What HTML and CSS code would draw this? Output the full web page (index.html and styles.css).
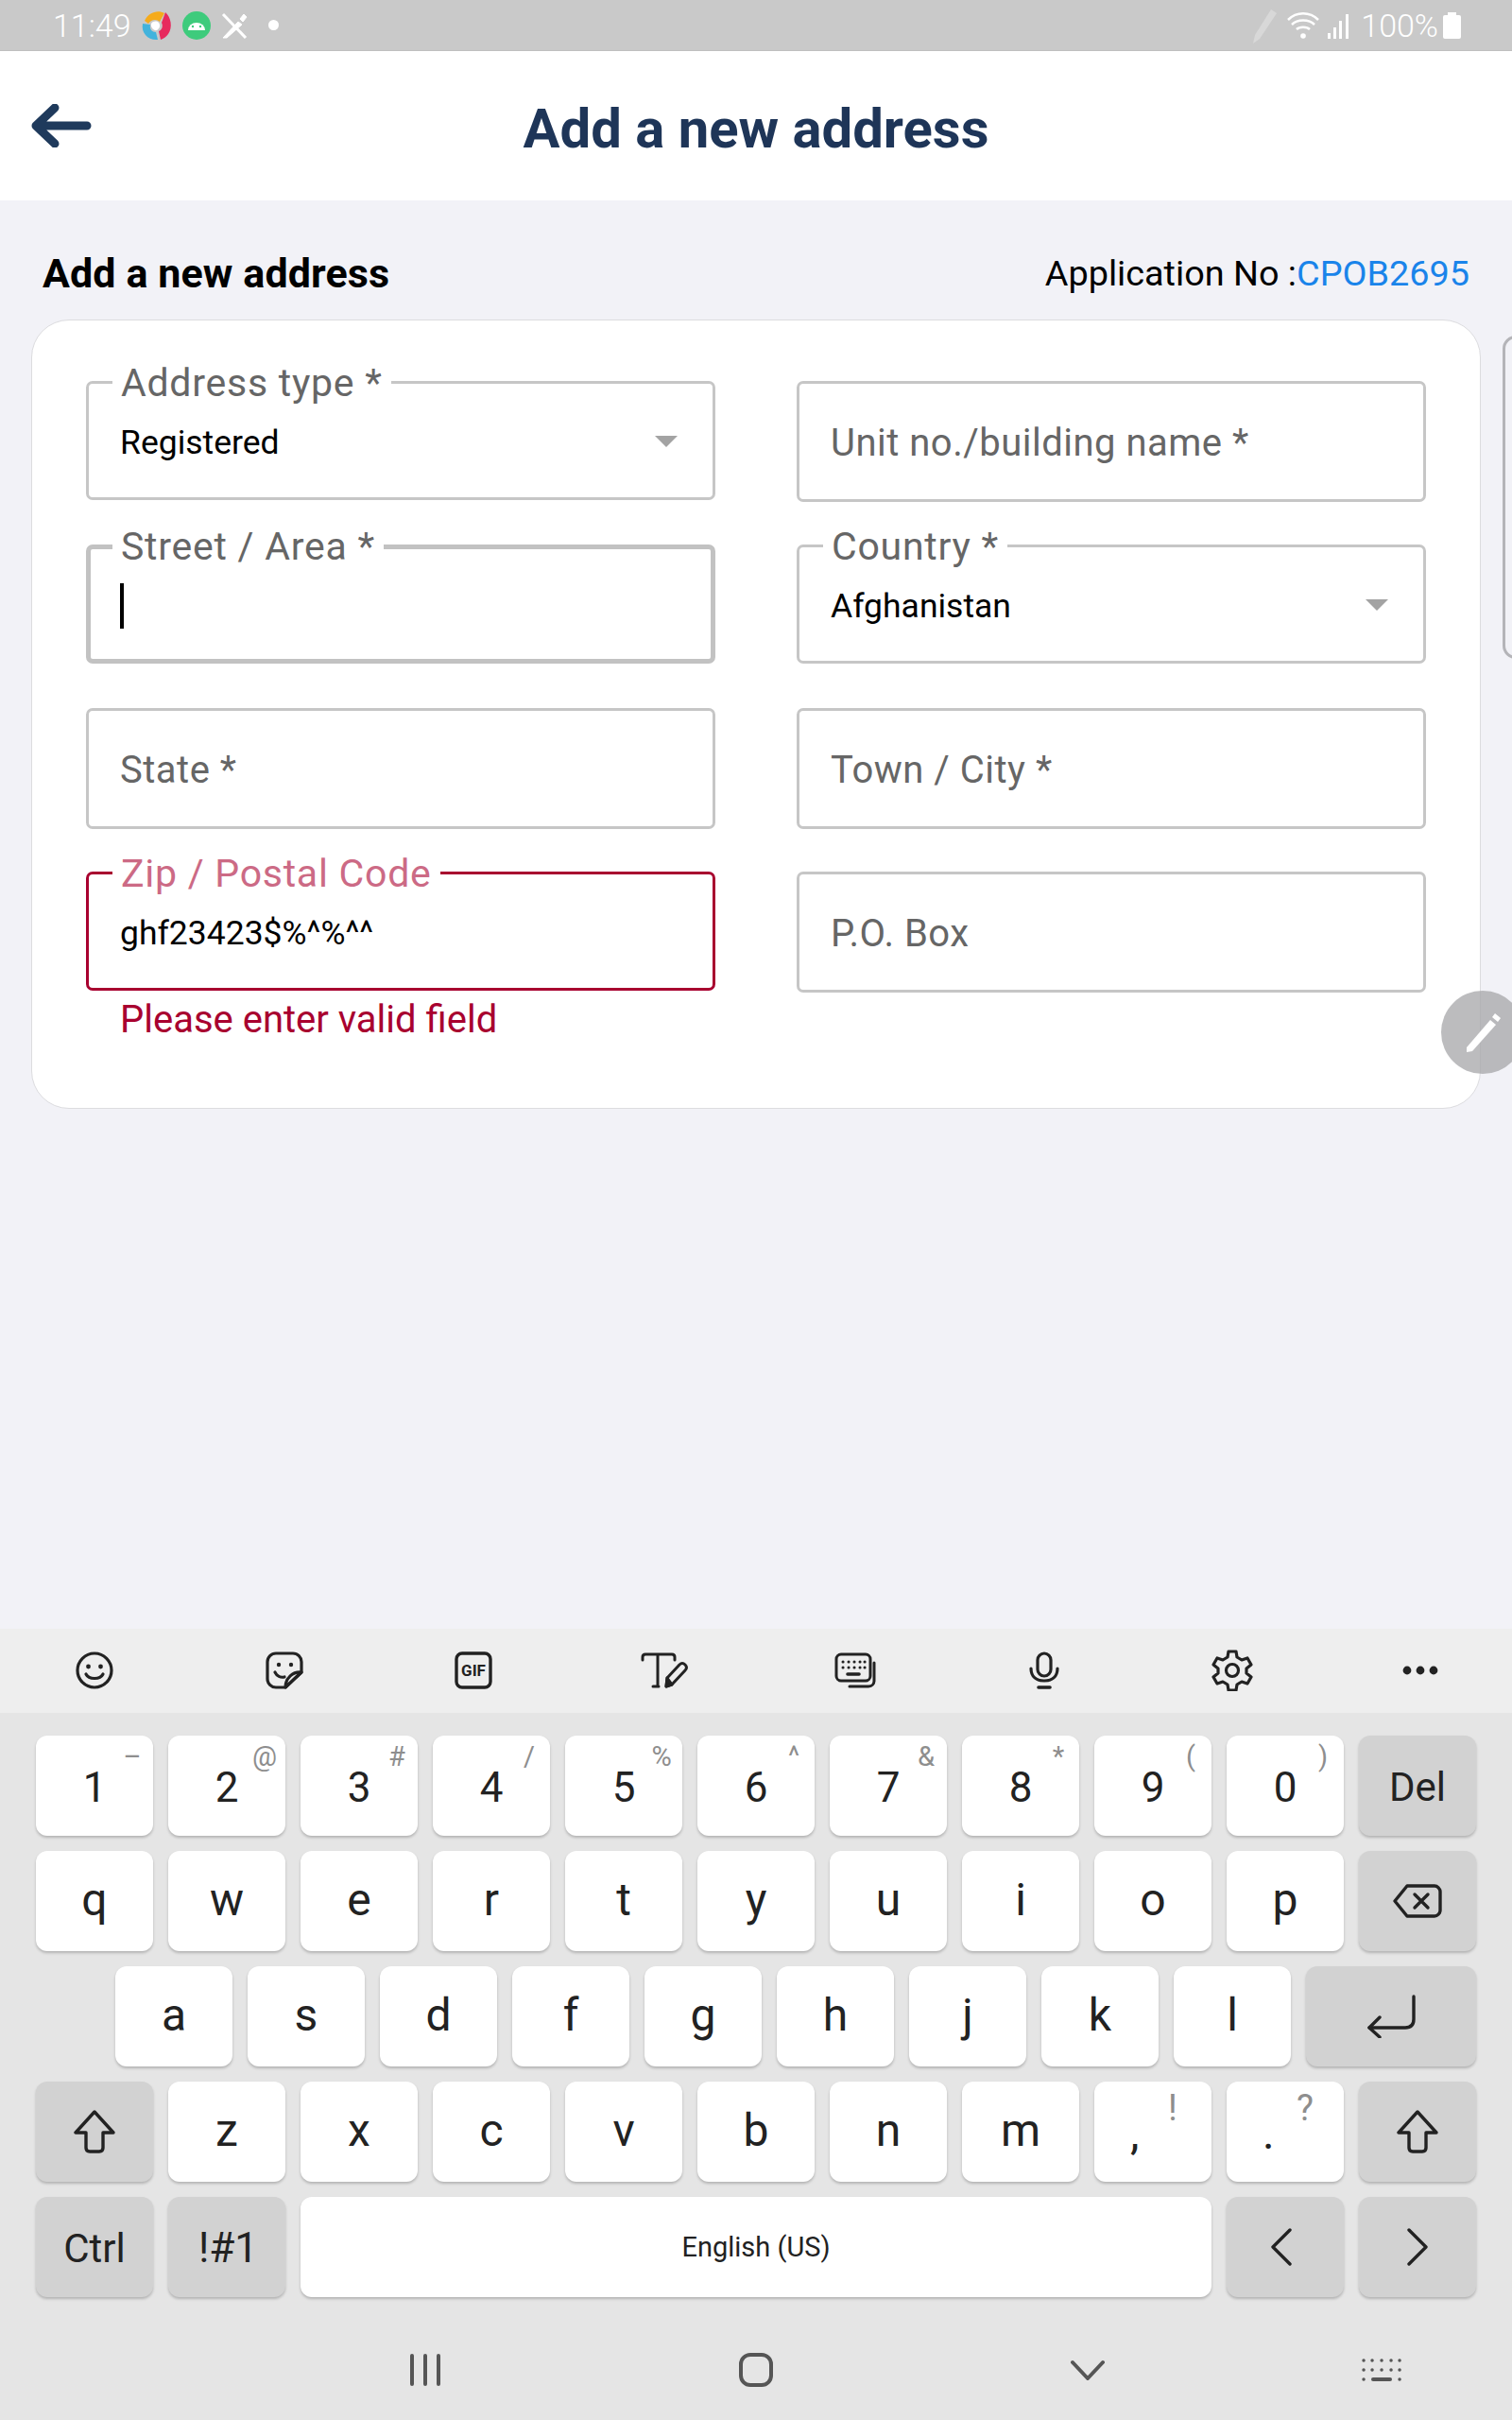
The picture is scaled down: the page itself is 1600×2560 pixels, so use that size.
FILE: index.html
```html
<!DOCTYPE html>
<html lang="en">
<head>
  <meta charset="UTF-8">
  <title>Add a new address</title>
  <link rel="stylesheet" href="styles.css">
</head>
<body>
  <div class="statusbar">
    <span class="clock">11:49</span>
    <svg class="st-app" width="34" height="34" viewBox="0 0 34 34">
      <path d="M4 12C8 3 18 0 25 4l-5 9c-3-3-9-3-12 2z" fill="#f5ab1c"/>
      <path d="M26 3c6 5 8 16 3 23-2 3-5 5-8 6l-2-9c3-1 5-5 3-9z" fill="#e72a5e"/>
      <path d="M2 15l8 1c-1 5 2 8 6 8l2 8C8 33 0 25 2 15z" fill="#43b3dc"/>
      <path d="M11 15c2-3 6-3 8-1 2 3 1 6-2 8-3 1-7-3-6-7z" fill="#fff"/>
    </svg>
    <svg class="st-app" width="30" height="30" viewBox="0 0 30 30">
      <circle cx="15" cy="15" r="15" fill="#3ecb7c"/>
      <path d="M6 20a9 8 0 0 1 18 0z" fill="#fff"/>
      <circle cx="11" cy="16" r="1.2" fill="#3ecb7c"/>
      <circle cx="19" cy="16" r="1.2" fill="#3ecb7c"/>
    </svg>
    <svg class="st-icon" width="30" height="30" viewBox="0 0 30 30" fill="none" stroke="#fff">
      <path d="M3 3l24 25" stroke-width="3"/>
      <path d="M3 28L19 11l4 3L7 28z" fill="#fff" stroke-width="1"/>
      <path d="M21 8l4-5 3 3-4 5z" fill="#fff" stroke-width="1"/>
    </svg>
    <span class="st-dot"></span>
    <span class="st-spacer"></span>
    <svg width="28" height="40" viewBox="0 0 28 40" fill="#d8d8d8"><path d="M1 39l2-9L20 3l6 4L8 34z"/></svg>
    <svg class="st-wifi" width="38" height="32" viewBox="0 0 38 32" fill="none" stroke="#fff" stroke-width="2.5">
      <path d="M2 10c9-9 23-9 32 0M6 15c6-6 18-6 24 0M11 20c3-3 11-3 14 0"/>
      <circle cx="18" cy="27" r="2.8" fill="#fff" stroke="none"/>
    </svg>
    <svg class="st-signal" width="24" height="28" viewBox="0 0 24 28" fill="#fff">
      <rect x="0" y="22" width="3" height="6"/><rect x="6" y="16" width="3" height="12"/>
      <rect x="12" y="9" width="3" height="19"/><rect x="19" y="2" width="3" height="26"/>
    </svg>
    <span class="st-batt-text">100%</span>
    <svg class="st-batt" width="19" height="28" viewBox="0 0 19 28" fill="#fff">
      <rect x="5" y="0" width="9" height="4"/><rect x="0" y="3" width="19" height="25" rx="2"/>
    </svg>
  </div>

  <header class="topbar">
    <svg class="back" width="64" height="46" viewBox="0 0 64 46" fill="none" stroke="#1f3a5c" stroke-width="9" stroke-linecap="round" stroke-linejoin="round">
      <path d="M59 23H5M25 4L5 23l20 19"/>
    </svg>
    <h1>Add a new address</h1>
  </header>

  <main class="content">
    <div class="section-head">
      <h2>Add a new address</h2>
      <span class="app-no">Application No :<span class="app-code">CPOB2695</span></span>
    </div>

    <div class="cards">
      <section class="card">
        <div class="form-grid">
          <div class="field">
            <label class="float">Address type *</label>
            <span class="value">Registered</span>
            <span class="caret"></span>
          </div>
          <div class="field tall">
            <span class="placeholder">Unit no./building name *</span>
          </div>
          <div class="field focused">
            <label class="float">Street / Area *</label>
            <span class="cursor"></span>
          </div>
          <div class="field">
            <label class="float">Country *</label>
            <span class="value">Afghanistan</span>
            <span class="caret"></span>
          </div>
          <div class="field tall">
            <span class="placeholder">State *</span>
          </div>
          <div class="field tall">
            <span class="placeholder">Town / City *</span>
          </div>
          <div class="field-wrap">
            <div class="field error">
              <label class="float">Zip / Postal Code</label>
              <span class="value">ghf23423$%^%^^</span>
            </div>
            <p class="error-text">Please enter valid field</p>
          </div>
          <div class="field tall">
            <span class="placeholder">P.O. Box</span>
          </div>
        </div>
      </section>
      <div class="card-next"></div>
    </div>

    <div class="fab">
      <svg width="40" height="42" viewBox="0 0 40 42" fill="#fff">
        <path d="M3 37L28 8l6 5L9 41l-6 1z"/>
        <path d="M30 5l3-4 6 5-3 4z"/>
      </svg>
    </div>
  </main>

  <div class="keyboard">
    <div class="kb-tools">
      <div class="tool">
        <svg width="40" height="40" viewBox="0 0 40 40" fill="none" stroke="#222" stroke-width="3.2" stroke-linecap="round">
          <circle cx="20" cy="20" r="18"/>
          <circle cx="13.5" cy="16" r="2.4" fill="#222" stroke="none"/>
          <circle cx="26.5" cy="16" r="2.4" fill="#222" stroke="none"/>
          <path d="M11 24c3 6 15 6 18 0"/>
        </svg>
      </div>
      <div class="tool">
        <svg width="40" height="40" viewBox="0 0 40 40" fill="none" stroke="#222" stroke-width="3.2" stroke-linecap="round" stroke-linejoin="round">
          <path d="M21 38H11a9 9 0 0 1-9-9V11a9 9 0 0 1 9-9h18a9 9 0 0 1 9 9v11z"/>
          <path d="M38 22c-9-1-17 6-17 16z"/>
          <circle cx="14" cy="14" r="2.2" fill="#222" stroke="none"/>
          <circle cx="27" cy="14" r="2.2" fill="#222" stroke="none"/>
          <path d="M10 22c2 4 6 6 10 5"/>
        </svg>
      </div>
      <div class="tool">
        <svg width="40" height="40" viewBox="0 0 40 40">
          <rect x="2" y="2" width="36" height="36" rx="6" fill="none" stroke="#222" stroke-width="3.4"/>
          <text x="20" y="26" text-anchor="middle" class="gif-text">GIF</text>
        </svg>
      </div>
      <div class="tool nudge-sm">
        <svg width="50" height="38" viewBox="0 0 50 38" fill="none" stroke="#222" stroke-width="3" stroke-linecap="round" stroke-linejoin="round">
          <path d="M2 8V5c0-2 1-3 3-3h28c2 0 3 1 3 3v3M18 2v34M13 36h6"/>
          <path d="M27 36l1-9 13-14c2-2 4-2 6 0s2 4 0 6L33 34z"/>
          <path d="M27 36l1-9 5 7z" fill="#222"/>
        </svg>
      </div>
      <div class="tool nudge">
        <svg width="44" height="38" viewBox="0 0 44 38" fill="none" stroke="#222" stroke-width="3" stroke-linecap="round">
          <rect x="2" y="2" width="36" height="28" rx="5"/>
          <path d="M42 11v19c0 3-2 6-6 6H16"/>
          <path d="M9 10h.1M15 10h.1M21 10h.1M27 10h.1M32 10h.1M9 16h.1M15 16h.1M21 16h.1M27 16h.1M32 16h.1"/>
          <path d="M14 23h12" stroke-width="3.6"/>
        </svg>
      </div>
      <div class="tool nudge">
        <svg width="32" height="40" viewBox="0 0 32 40" fill="none" stroke="#222" stroke-width="3.2" stroke-linecap="round">
          <rect x="9" y="2" width="14" height="24" rx="7"/>
          <path d="M2 18c0 9 6 13 14 13s14-4 14-13"/>
          <path d="M10 38h12" stroke-width="3.6"/>
        </svg>
      </div>
      <div class="tool nudge-sm">
        <svg width="44" height="44" viewBox="0 0 44 44" fill="none" stroke="#222" stroke-width="3.2" stroke-linejoin="round">
          <path d="M18 2h8l1 6 5 3 6-2 4 7-5 4v5l5 4-4 7-6-2-5 3-1 6h-8l-1-6-5-3-6 2-4-7 5-4v-5l-5-4 4-7 6 2 5-3z"/>
          <circle cx="22" cy="22" r="6.5"/>
        </svg>
      </div>
      <div class="tool">
        <svg width="38" height="10" viewBox="0 0 38 10" fill="#222">
          <circle cx="5" cy="5" r="4.4"/><circle cx="19" cy="5" r="4.4"/><circle cx="33" cy="5" r="4.4"/>
        </svg>
      </div>
    </div>

    <div class="kb-keys">
      <div class="kb-row">
        <div class="key num">1<span class="hint">–</span></div>
        <div class="key num">2<span class="hint">@</span></div>
        <div class="key num">3<span class="hint">#</span></div>
        <div class="key num">4<span class="hint">/</span></div>
        <div class="key num">5<span class="hint">%</span></div>
        <div class="key num">6<span class="hint">^</span></div>
        <div class="key num">7<span class="hint">&amp;</span></div>
        <div class="key num">8<span class="hint">*</span></div>
        <div class="key num">9<span class="hint">(</span></div>
        <div class="key num">0<span class="hint">)</span></div>
        <div class="key fn label">Del</div>
      </div>
      <div class="kb-row">
        <div class="key">q</div><div class="key">w</div><div class="key">e</div><div class="key">r</div>
        <div class="key">t</div><div class="key">y</div><div class="key">u</div><div class="key">i</div>
        <div class="key">o</div><div class="key">p</div>
        <div class="key fn icon">
          <svg width="52" height="36" viewBox="0 0 52 36" fill="none" stroke="#222" stroke-width="3.4" stroke-linecap="round" stroke-linejoin="round">
            <path d="M15 2h29c3 0 6 3 6 6v20c0 3-3 6-6 6H15L2 18z"/>
            <path d="M23 11l14 14M37 11L23 25"/>
          </svg>
        </div>
      </div>
      <div class="kb-row row-home">
        <div class="key">a</div><div class="key">s</div><div class="key">d</div><div class="key">f</div>
        <div class="key">g</div><div class="key">h</div><div class="key">j</div><div class="key">k</div>
        <div class="key">l</div>
        <div class="key fn wide icon">
          <svg width="52" height="46" viewBox="0 0 52 46" fill="none" stroke="#222" stroke-width="3.4" stroke-linecap="round" stroke-linejoin="round">
            <path d="M50 2v24c0 6-3 9-9 9H3"/>
            <path d="M14 24L3 35l11 10"/>
          </svg>
        </div>
      </div>
      <div class="kb-row">
        <div class="key fn icon">
          <svg class="shift" width="44" height="46" viewBox="0 0 44 46" fill="none" stroke="#222" stroke-width="3.4" stroke-linejoin="round">
            <path d="M22 2L2 24h11v16c0 3 2 4 4 4h10c2 0 4-1 4-4V24h11z"/>
          </svg>
        </div>
        <div class="key">z</div><div class="key">x</div><div class="key">c</div><div class="key">v</div>
        <div class="key">b</div><div class="key">n</div><div class="key">m</div>
        <div class="key punct">,<span class="hint">!</span></div>
        <div class="key punct">.<span class="hint">?</span></div>
        <div class="key fn icon">
          <svg class="shift" width="44" height="46" viewBox="0 0 44 46" fill="none" stroke="#222" stroke-width="3.4" stroke-linejoin="round">
            <path d="M22 2L2 24h11v16c0 3 2 4 4 4h10c2 0 4-1 4-4V24h11z"/>
          </svg>
        </div>
      </div>
      <div class="kb-row">
        <div class="key fn label">Ctrl</div>
        <div class="key fn label sym">!#1</div>
        <div class="key wide space">English (US)</div>
        <div class="key fn icon">
          <svg class="chev-left" width="24" height="40" viewBox="0 0 24 40" fill="none" stroke="#222" stroke-width="3.4" stroke-linecap="round" stroke-linejoin="round">
            <path d="M21 2L3 20l18 18"/>
          </svg>
        </div>
        <div class="key fn icon">
          <svg width="24" height="40" viewBox="0 0 24 40" fill="none" stroke="#222" stroke-width="3.4" stroke-linecap="round" stroke-linejoin="round">
            <path d="M3 2l18 18L3 38"/>
          </svg>
        </div>
      </div>
    </div>

    <nav class="navbar">
      <svg width="34" height="36" viewBox="0 0 34 36" fill="#555">
        <rect x="1" y="1" width="4" height="34" rx="2"/><rect x="15" y="1" width="4" height="34" rx="2"/><rect x="29" y="1" width="4" height="34" rx="2"/>
      </svg>
      <svg width="36" height="36" viewBox="0 0 36 36" fill="none" stroke="#555" stroke-width="4">
        <rect x="2" y="2" width="32" height="32" rx="10"/>
      </svg>
      <svg width="36" height="22" viewBox="0 0 36 22" fill="none" stroke="#555" stroke-width="4" stroke-linecap="round" stroke-linejoin="round">
        <path d="M2 3l16 17L34 3"/>
      </svg>
      <svg class="nav-kbd" width="42" height="24" viewBox="0 0 42 24" fill="none" stroke="#555" stroke-width="3.4" stroke-linecap="round">
        <path d="M2 2h.1M11 2h.1M21 2h.1M31 2h.1M40 2h.1M2 12h.1M11 12h.1M21 12h.1M31 12h.1M40 12h.1M2 22h.1M40 22h.1"/>
        <path d="M12 22h18" stroke-width="4"/>
      </svg>
    </nav>
  </div>
</body>
</html>
```

FILE: styles.css
```css
* {
  box-sizing: border-box;
}
html, body {
  margin: 0;
  height: 2560px;
}
body {
  width: 1600px;
  overflow: hidden;
  display: flex;
  flex-direction: column;
  font-family: Roboto, "Liberation Sans", sans-serif;
  background: #f2f2f7;
}

/* status bar */
.statusbar {
  height: 54px;
  flex: none;
  display: flex;
  align-items: center;
  padding: 0 54px 0 56px;
  background: #c9c9c9;
  border-bottom: 1px solid #bfbfbf;
}
.clock {
  width: 93px;
  font-size: 34px;
  font-weight: 300;
  color: #fff;
}
.st-app {
  margin-right: 10px;
}
.st-icon {
  margin-left: 0;
}
.st-dot {
  width: 11px;
  height: 11px;
  margin-left: 21px;
  border-radius: 50%;
  background: #fff;
}
.st-spacer {
  flex: 1;
}
.st-wifi {
  margin-left: 8px;
}
.st-signal {
  margin-left: 6px;
}
.st-batt-text {
  margin-left: 11px;
  font-size: 34px;
  font-weight: 300;
  color: #fff;
}
.st-batt {
  margin-left: 5px;
}

/* top bar */
.topbar {
  height: 158px;
  flex: none;
  position: relative;
  display: flex;
  align-items: center;
  justify-content: center;
  padding-top: 5px;
  background: #fff;
}
.back {
  position: absolute;
  left: 33px;
  top: 56px;
}
.topbar h1 {
  margin: 0;
  font-size: 58px;
  font-weight: 700;
  color: #1e3558;
}

/* content */
.content {
  flex: 1;
  position: relative;
  background: #f2f2f7;
}
.section-head {
  height: 126px;
  padding: 27px 45px 0 45px;
  display: flex;
  align-items: center;
  justify-content: space-between;
}
.section-head h2 {
  margin: 0;
  font-size: 43px;
  font-weight: 700;
  letter-spacing: 0.1px;
  color: #000;
}
.app-no {
  font-size: 37.8px;
  color: #000;
}
.app-code {
  color: #1a84ea;
}
.cards {
  display: flex;
  align-items: flex-start;
  gap: 23px;
  padding-left: 33px;
}
.card {
  width: 1534px;
  height: 835px;
  flex: none;
  padding: 64px 55px 0 57px;
  background: #fff;
  border: 1px solid #dcdcdf;
  border-radius: 40px;
}
.card-next {
  width: 60px;
  height: 342px;
  flex: none;
  margin-top: 17px;
  border: 3px solid #b4b4b8;
  border-radius: 14px;
}
.form-grid {
  display: grid;
  grid-template-columns: 666px 666px;
  grid-template-rows: 128px 128px 128px auto;
  column-gap: 86px;
  row-gap: 45px;
  align-items: start;
}
.field {
  position: relative;
  height: 126px;
  display: flex;
  align-items: center;
  padding: 3px 33px 0 33px;
  border: 3px solid #c6c6c6;
  border-radius: 7px;
}
.field.tall {
  height: 128px;
}
.field.focused {
  border-width: 5px;
  border-color: #c2c2c2;
  padding-left: 31px;
}
.field.error {
  border-color: #a8002f;
}
.float {
  position: absolute;
  left: 25px;
  top: -24px;
  padding: 0 9px;
  background: #fff;
  font-size: 41px;
  line-height: 46px;
  letter-spacing: 0.75px;
  color: #666;
}
.focused .float {
  left: 23px;
  top: -26px;
}
.error .float {
  color: #cc6a85;
}
.value {
  font-size: 35.5px;
  color: #000;
}
.placeholder {
  font-size: 40px;
  letter-spacing: 0.5px;
  color: #666;
}
.caret {
  position: absolute;
  right: 37px;
  top: 55px;
  border-left: 12px solid transparent;
  border-right: 12px solid transparent;
  border-top: 12px solid #a3a3a3;
}
.cursor {
  width: 4px;
  height: 48px;
  background: #000;
}
.error-text {
  margin: 7px 0 0 36px;
  font-size: 40px;
  color: #a8002f;
}
.fab {
  position: absolute;
  left: 1525px;
  top: 836px;
  width: 88px;
  height: 88px;
  display: flex;
  align-items: center;
  justify-content: center;
  border-radius: 50%;
  background: rgba(165, 165, 168, 0.75);
}

/* keyboard */
.keyboard {
  height: 837px;
  flex: none;
  display: flex;
  flex-direction: column;
  background: #e5e5e5;
}
.kb-tools {
  height: 89px;
  flex: none;
  display: grid;
  grid-template-columns: repeat(8, 200.4px);
  padding-bottom: 2px;
  background: #eeeeee;
}
.tool {
  display: flex;
  align-items: center;
  justify-content: center;
}
.tool.nudge {
  padding-left: 6px;
}
.tool.nudge-sm {
  padding-left: 3px;
}
.gif-text {
  font-family: Roboto, sans-serif;
  font-size: 17px;
  font-weight: 700;
  fill: #222;
}
.kb-keys {
  display: flex;
  flex-direction: column;
  gap: 16px;
  padding: 24px 38px 0 38px;
}
.kb-row {
  display: flex;
  gap: 16px;
}
.row-home {
  padding-left: 84px;
}
.key {
  position: relative;
  width: 124px;
  height: 106px;
  flex: none;
  display: flex;
  align-items: center;
  justify-content: center;
  padding-bottom: 3px;
  background: #fff;
  border-radius: 12px;
  box-shadow: 0 2px 3px rgba(0, 0, 0, 0.22);
  font-size: 48px;
  color: #222;
}
.key.icon {
  padding-bottom: 0;
}
.key.num {
  padding: 4px 0 0 0;
  font-size: 44px;
}
.key.fn {
  background: #d2d2d2;
}
.key.wide {
  flex: 1;
}
.key.label {
  padding: 2px 0 0 0;
  font-size: 42px;
}
.key.sym {
  font-size: 44px;
  padding-left: 3px;
}
.key.space {
  padding: 0;
  font-size: 29px;
}
.key.punct {
  justify-content: flex-start;
  padding: 3px 0 0 38px;
}
.chev-left {
  margin-right: 8px;
}
.hint {
  position: absolute;
  right: 8px;
  top: 5px;
  width: 28px;
  text-align: center;
  font-size: 29px;
  color: #8e8e8e;
}
.punct .hint {
  right: 27px;
  top: 6px;
  font-size: 38px;
}
.navbar {
  flex: 1;
  display: flex;
  align-items: center;
  gap: 315px;
  padding: 0 0 0 433px;
  margin-top: 24px;
}
.nav-kbd {
  margin-left: -43px;
}
```
